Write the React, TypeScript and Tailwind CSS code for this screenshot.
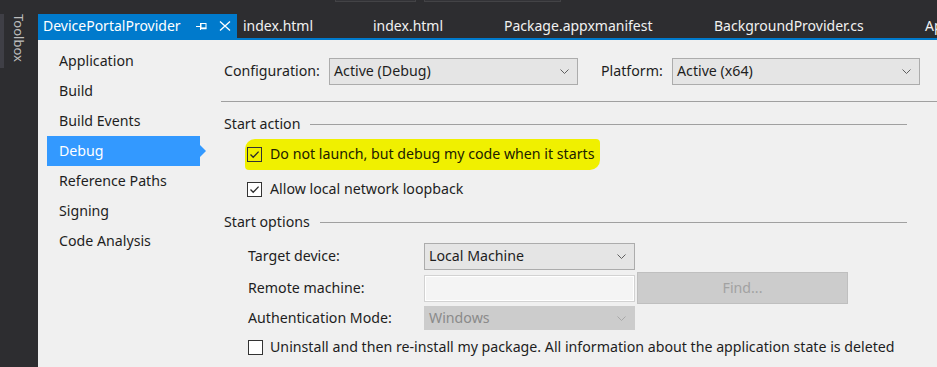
import React from "react";

function Chevron({ color = "#5f5f5f" }: { color?: string }) {
  return (
    <svg width="9" height="5" viewBox="0 0 9 5" className="shrink-0">
      <path d="M0.5 0.5 L4.5 4.5 L8.5 0.5" fill="none" stroke={color} strokeWidth="1" />
    </svg>
  );
}

function Select({ value, width, disabled = false }: { value: string; width: string; disabled?: boolean }) {
  return (
    <div
      className={`${width} flex items-center justify-between pl-[4px] pr-[8px] border ${
        disabled ? "h-[24px] bg-[#cccccc] border-[#cccccc] text-[#8a8a8a]" : "h-[27px] bg-[#e5e5e5] border-[#acacac] text-[#1e1e1e]"
      }`}
    >
      <span>{value}</span>
      <Chevron color={disabled ? "#a8a8a8" : "#5f5f5f"} />
    </div>
  );
}

function Checkbox({ checked, fill = "bg-white" }: { checked: boolean; fill?: string }) {
  return (
    <div className={`w-[15px] h-[15px] border border-[#333333] ${fill} shrink-0 flex items-center justify-center`}>
      {checked && (
        <svg width="13" height="13" viewBox="0 0 13 13">
          <path d="M2.5 6.5 L5.2 9.3 L10.6 3.6" fill="none" stroke="#2b2b2b" strokeWidth="1.3" />
        </svg>
      )}
    </div>
  );
}

function SectionHeader({ title, className }: { title: string; className: string }) {
  return (
    <div className={`flex items-center h-[20px] pl-[3px] pr-[30px] ${className}`}>
      <span className="text-[#1e1e1e]">{title}</span>
      <div className="flex-1 h-px bg-[#a0a0a0] ml-[10px]" />
    </div>
  );
}

const navItems = ["Application", "Build", "Build Events", "Debug", "Reference Paths", "Signing", "Code Analysis"];
const tabs = [
  { name: "index.html", w: "w-[130px]" },
  { name: "index.html", w: "w-[131px]" },
  { name: "Package.appxmanifest", w: "w-[210px]" },
  { name: "BackgroundProvider.cs", w: "w-[211px]" },
  { name: "AppxManifest.xml", w: "w-[120px]" },
];

export default function App() {
  return (
    <div className="w-[937px] h-[367px] bg-[#2d2d30] flex overflow-hidden font-['Noto_Sans',sans-serif] text-[14px] leading-none">
      {/* Toolbox strip */}
      <div className="w-[38px] shrink-0 flex pt-[14px]">
        <div className="w-[4px] h-[54px] bg-[#3f3f46]" />
        <div className="ml-[8px] [writing-mode:vertical-rl] text-[13px] text-[#bdbdbd] leading-[14px]">Toolbox</div>
      </div>

      <div className="flex-1 flex flex-col min-w-0">
        {/* toolbar remnants */}
        <div className="h-[14px] flex items-start pl-[297px] gap-[8px]">
          <div className="w-[81px] h-[2px] bg-[#333337] border-x border-b border-[#434346]" />
          <div className="w-[137px] h-[2px] bg-[#333337] border-x border-b border-[#434346]" />
        </div>

        {/* Tabs */}
        <div className="h-[24px] flex whitespace-nowrap">
          <div className="w-[199px] shrink-0 bg-[#007acc] flex items-center pl-[5px] text-white">
            <span>DevicePortalProvider</span>
            <svg width="11" height="9" viewBox="0 0 11 9" className="ml-[15px]">
              <path d="M0 4.5 H4.5 M4.5 1 V8" stroke="white" strokeWidth="1" fill="none" />
              <rect x="5" y="1.5" width="5" height="4.5" fill="none" stroke="white" strokeWidth="1" />
              <path d="M5 6.5 H10.5" stroke="white" strokeWidth="1.5" />
            </svg>
            <svg width="12" height="10" viewBox="0 0 12 10" className="ml-[12px]">
              <path d="M1 0.5 L11 9.5 M11 0.5 L1 9.5" stroke="white" strokeWidth="1.3" fill="none" />
            </svg>
          </div>
          {tabs.map((t, i) => (
            <div key={i} className={`${t.w} shrink-0 flex items-center pl-[6px] text-[#f1f1f1]`}>
              {t.name}
            </div>
          ))}
        </div>
        <div className="h-[2px] bg-[#007acc]" />

        {/* Property page */}
        <div className="flex-1 bg-[#f0f0f0] flex text-[#1e1e1e] text-[14.2px]">
          {/* Nav */}
          <div className="w-[183px] shrink-0 pt-[6px] pl-[9px]">
            {navItems.map((n) => {
              const active = n === "Debug";
              return (
                <div key={n} className="flex items-center">
                  <div className={`w-[153px] h-[30px] flex items-center pl-[12px] pt-[1px] ${active ? "bg-[#3399ff] text-white" : ""}`}>{n}</div>
                  {active && (
                    <svg width="6" height="12" viewBox="0 0 6 12">
                      <path d="M0 0 L6 6 L0 12 Z" fill="#3399ff" />
                    </svg>
                  )}
                </div>
              );
            })}
          </div>

          {/* Content */}
          <div className="flex-1 flex flex-col pt-[18px] whitespace-nowrap">
            <div className="flex items-center pl-[3px]">
              <span className="w-[105px]">Configuration:</span>
              <Select value="Active (Debug)" width="w-[249px]" />
              <span className="ml-[23px] w-[71px]">Platform:</span>
              <Select value="Active (x64)" width="w-[248px]" />
            </div>

            <div className="h-px bg-[#a0a0a0] mt-[16px]" />

            <SectionHeader title="Start action" className="mt-[12px]" />

            <div className="mt-[5px] pl-[24px] flex">
              <div className="flex items-center h-[31px] bg-[#f0f000] pl-[2px] pr-[6px] rounded-tl-[10px] rounded-tr-[4px] rounded-bl-[4px] rounded-br-[10px]">
                <Checkbox checked fill="bg-[#f0f000]" />
                <span className="ml-[8px] text-[#202000]">Do not launch, but debug my code when it starts</span>
              </div>
            </div>

            <div className="mt-[9px] pl-[26px] flex items-center h-[20px]">
              <Checkbox checked />
              <span className="ml-[8px]">Allow local network loopback</span>
            </div>

            <SectionHeader title="Start options" className="mt-[13px]" />

            <div className="mt-[11px] pl-[27px] flex items-center">
              <span className="w-[176px]">Target device:</span>
              <Select value="Local Machine" width="w-[211px]" />
            </div>

            <div className="mt-[2px] pl-[27px] flex items-center h-[32px]">
              <span className="w-[176px]">Remote machine:</span>
              <div className="w-[211px] h-[27px] border border-[#d2d2d2] bg-[#f4f4f4] shadow-[inset_0_0_0_1px_#ffffff]" />
              <div className="ml-[2px] w-[211px] h-[32px] bg-[#cccccc] border border-[#bfbfbf] flex items-center justify-center text-[#a2a2a2]">
                Find...
              </div>
            </div>

            <div className="mt-[2px] pl-[27px] flex items-center">
              <span className="w-[176px]">Authentication Mode:</span>
              <Select value="Windows" width="w-[211px]" disabled />
            </div>

            <div className="mt-[7px] pl-[27px] flex items-center h-[20px]">
              <Checkbox checked={false} />
              <span className="ml-[7px]">Uninstall and then re-install my package. All information about the application state is deleted</span>
            </div>
          </div>
        </div>
      </div>
    </div>
  );
}
